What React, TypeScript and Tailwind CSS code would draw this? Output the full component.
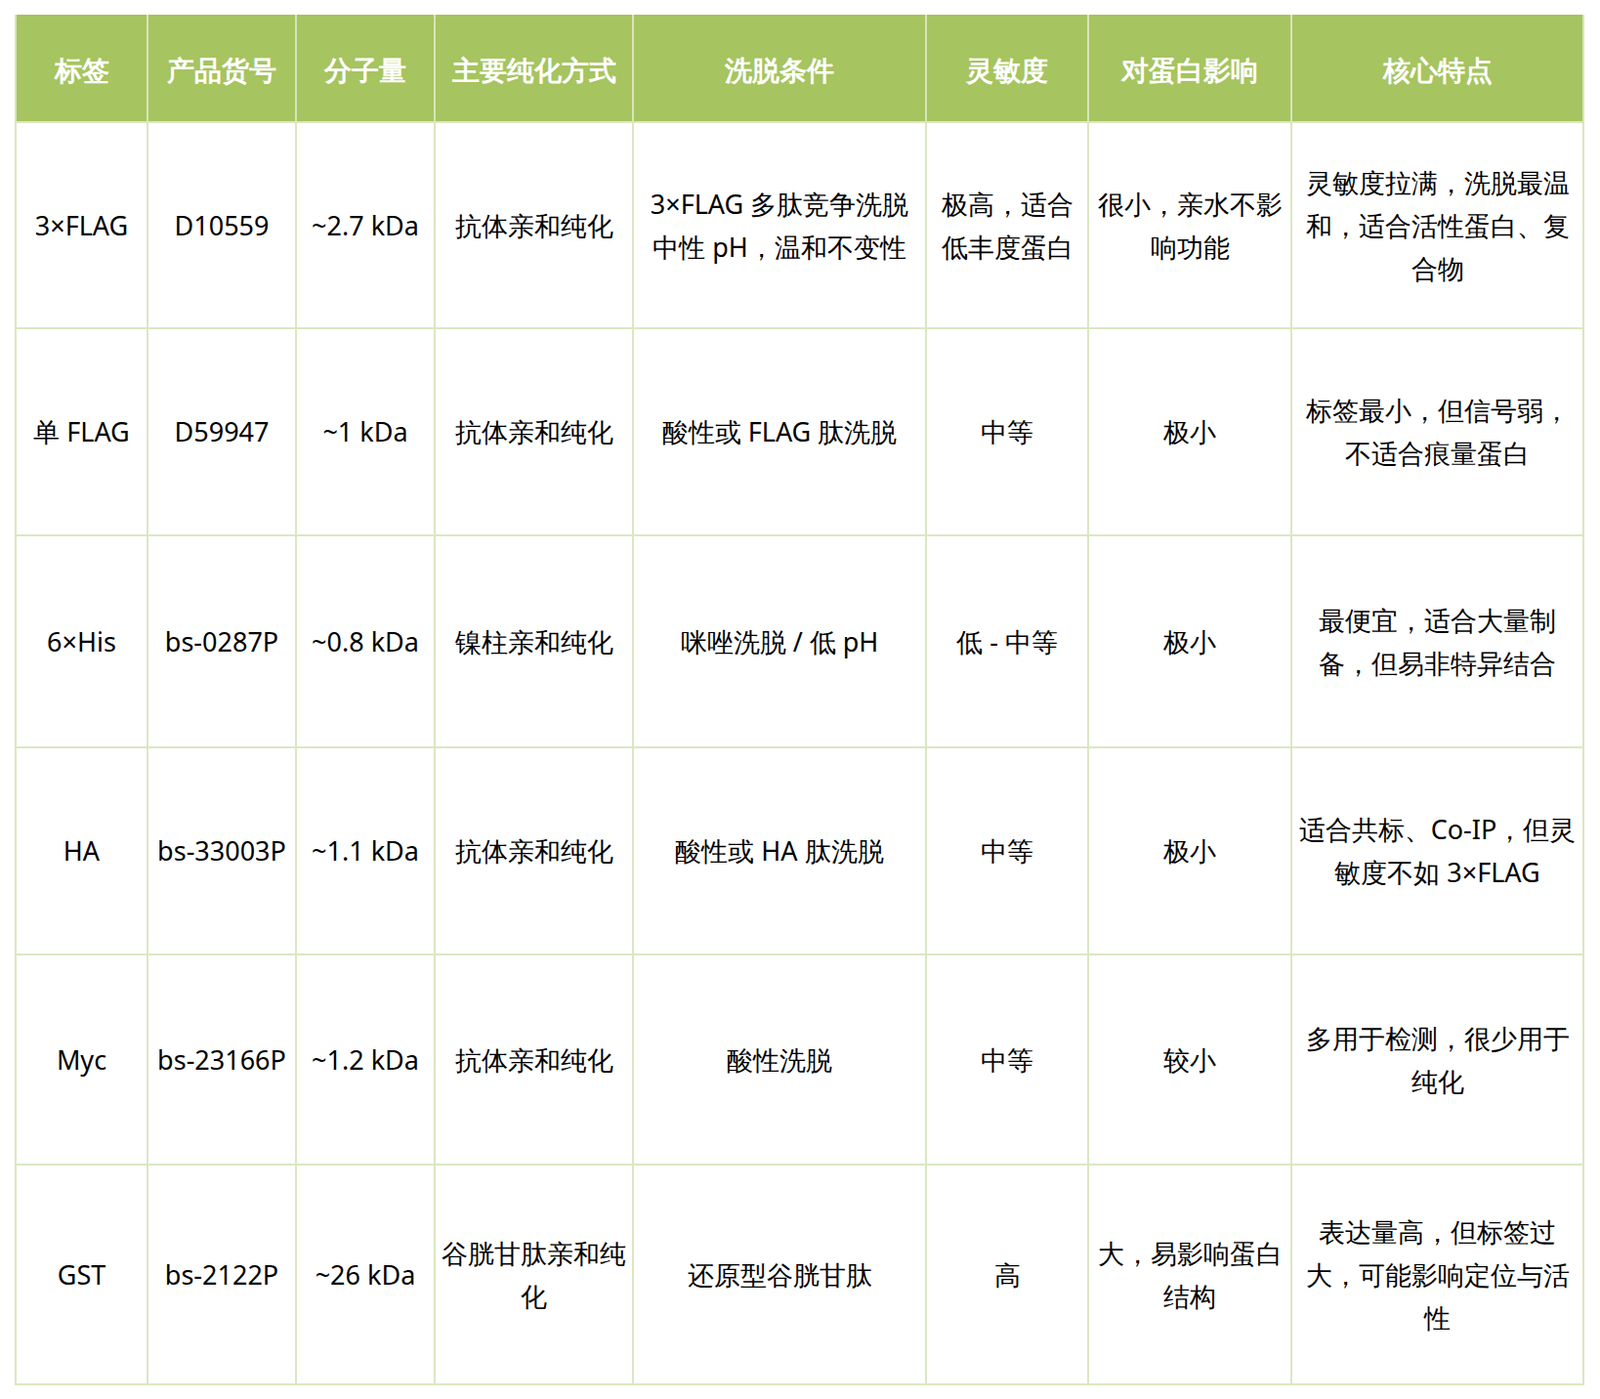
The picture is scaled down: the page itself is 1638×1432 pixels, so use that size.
import React from "react";

const head = ["标签", "产品货号", "分子量", "主要纯化方式", "洗脱条件", "灵敏度", "对蛋白影响", "核心特点"];
const colCls = ["w-[135px]", "w-[152px]", "w-[142px]", "w-[203px]", "w-[300px]", "w-[166px]", "w-[208px]", "w-[299px]"];
const rowCls = ["h-[211px]", "h-[212px]", "h-[217px]", "h-[212px]", "h-[215px]", "h-[225px]"];
const rows: string[][] = [
  ["3×FLAG", "D10559", "~2.7 kDa", "抗体亲和纯化", "3×FLAG 多肽竞争洗脱\n中性 pH，温和不变性", "极高，适合低丰度蛋白", "很小，亲水不影响功能", "灵敏度拉满，洗脱最温和，适合活性蛋白、复合物"],
  ["单 FLAG", "D59947", "~1 kDa", "抗体亲和纯化", "酸性或 FLAG 肽洗脱", "中等", "极小", "标签最小，但信号弱，不适合痕量蛋白"],
  ["6×His", "bs-0287P", "~0.8 kDa", "镍柱亲和纯化", "咪唑洗脱 / 低 pH", "低 - 中等", "极小", "最便宜，适合大量制备，但易非特异结合"],
  ["HA", "bs-33003P", "~1.1 kDa", "抗体亲和纯化", "酸性或 HA 肽洗脱", "中等", "极小", "适合共标、Co-IP，但灵敏度不如 3×FLAG"],
  ["Myc", "bs-23166P", "~1.2 kDa", "抗体亲和纯化", "酸性洗脱", "中等", "较小", "多用于检测，很少用于纯化"],
  ["GST", "bs-2122P", "~26 kDa", "谷胱甘肽亲和纯化", "还原型谷胱甘肽", "高", "大，易影响蛋白结构", "表达量高，但标签过大，可能影响定位与活性"],
];

export default function App() {
  return (
    <div className="w-[1638px] h-[1432px] bg-white pt-[15px] pl-[15px] font-['Microsoft_YaHei','Noto_Sans_CJK_SC',sans-serif]">
      <table className="w-[1607px] border-collapse table-fixed border-2 border-[#a6c45f]">
        <colgroup>
          {colCls.map((c, i) => <col key={i} className={c} />)}
        </colgroup>
        <thead>
          <tr className="h-[109px] bg-[#a6c45f]">
            {head.map((h) => (
              <th key={h} className="border-x-2 border-[#d7e5b8] text-white text-[28px] font-bold text-center align-middle px-1 whitespace-nowrap">{h}</th>
            ))}
          </tr>
        </thead>
        <tbody>
          {rows.map((cells, r) => (
            <tr key={r} className={rowCls[r]}>
              {cells.map((c, i) => (
                <td key={i} className="border-2 border-[#dbe7c2] text-black text-[27px] leading-[44px] text-center align-middle px-[3px] whitespace-pre-line break-all">{c}</td>
              ))}
            </tr>
          ))}
        </tbody>
      </table>
    </div>
  );
}
